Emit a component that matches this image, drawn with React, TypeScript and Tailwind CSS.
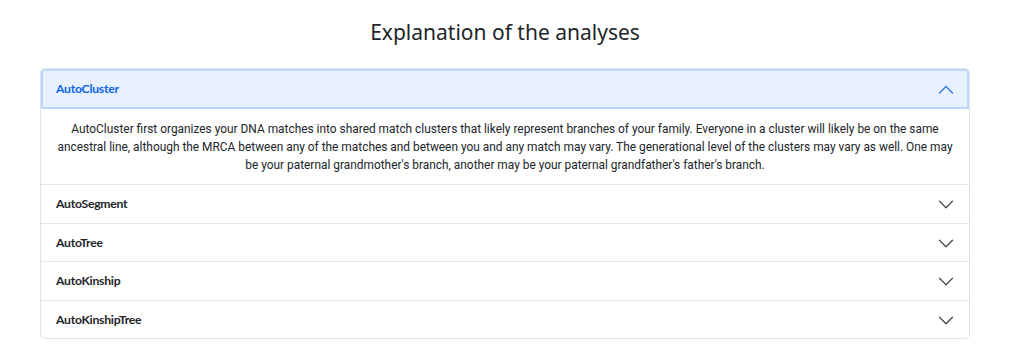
import { useState } from 'react'

const ITEMS = [
  {
    title: 'AutoCluster',
    body: "AutoCluster first organizes your DNA matches into shared match clusters that likely represent branches of your family. Everyone in a cluster will likely be on the same ancestral line, although the MRCA between any of the matches and between you and any match may vary. The generational level of the clusters may vary as well. One may be your paternal grandmother's branch, another may be your paternal grandfather's father's branch.",
  },
  { title: 'AutoSegment', body: '' },
  { title: 'AutoTree', body: '' },
  { title: 'AutoKinship', body: '' },
  { title: 'AutoKinshipTree', body: '' },
]

function Chevron({ up }: { up: boolean }) {
  return (
    <svg width="16" height="16" viewBox="0 0 16 16" fill="none" className={up ? 'text-[#2f6fe0]' : 'text-[#444]'}>
      <path
        d={up ? 'M1.5 11 8 4.5 14.5 11' : 'M1.5 5.25 8 11.75 14.5 5.25'}
        stroke="currentColor"
        strokeWidth="1.2"
        strokeLinecap="round"
        strokeLinejoin="round"
      />
    </svg>
  )
}

export default function App() {
  const [open, setOpen] = useState(0)

  return (
    <div className="w-[1022px] h-[359px] bg-white overflow-hidden font-['Roboto',sans-serif]">
      <div className="w-[1010px]">
        <h2 className="text-center pt-[16px] text-[21px] leading-[32px] text-[#212529] font-['Noto_Sans',sans-serif]">
          Explanation of the analyses
        </h2>

        <div className="mx-[40px] mt-[20px] border border-[#e2e2e2] rounded-[5px] overflow-hidden">
          {ITEMS.map((item, i) => {
            const isOpen = open === i
            return (
              <div key={item.title} className={i > 0 ? 'border-t border-[#e6e6e6]' : ''}>
                <button
                  onClick={() => setOpen(isOpen ? -1 : i)}
                  className={`w-full flex items-center justify-between pl-[15px] pr-[15px] pt-px text-left text-[12.2px] tracking-[-0.25px] font-bold font-['Lato',sans-serif] ${
                    isOpen
                      ? 'h-[40px] bg-[#e7f1ff] text-[#0c63e4] shadow-[inset_0_0_0_2px_#bcd6fb]'
                      : 'h-[37.6px] text-[#212529]'
                  }`}
                >
                  <span>{item.title}</span>
                  <Chevron up={isOpen} />
                </button>
                {isOpen && item.body && (
                  <div className="px-[14px] pt-[11px] pb-[10px] text-center text-[11.9px] leading-[18px] text-[#212529]">
                    {item.body}
                  </div>
                )}
              </div>
            )
          })}
        </div>
      </div>
    </div>
  )
}
